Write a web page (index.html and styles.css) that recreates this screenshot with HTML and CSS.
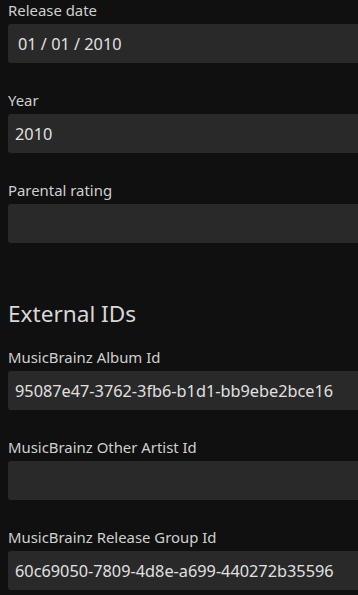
FILE: index.html
```html
<!DOCTYPE html>
<html lang="en">
<head>
<meta charset="UTF-8">
<meta name="viewport" content="width=device-width, initial-scale=1.0">
<title>Edit Metadata</title>
<link rel="stylesheet" href="styles.css">
</head>
<body>

<div class="editor">
  <div class="field">
    <label for="releaseDate">Release date</label>
    <input type="text" id="releaseDate" class="date-input" value="01 / 01 / 2010">
  </div>
  <div class="field">
    <label for="year">Year</label>
    <input type="text" id="year" value="2010">
  </div>
  <div class="field">
    <label for="parentalRating">Parental rating</label>
    <input type="text" id="parentalRating" value="">
  </div>

  <h2>External IDs</h2>

  <div class="field">
    <label for="mbAlbum">MusicBrainz Album Id</label>
    <input type="text" id="mbAlbum" value="95087e47-3762-3fb6-b1d1-bb9ebe2bce16">
  </div>
  <div class="field">
    <label for="mbOtherArtist">MusicBrainz Other Artist Id</label>
    <input type="text" id="mbOtherArtist" value="">
  </div>
  <div class="field">
    <label for="mbReleaseGroup">MusicBrainz Release Group Id</label>
    <input type="text" id="mbReleaseGroup" value="60c69050-7809-4d8e-a699-440272b35596">
  </div>
</div>

</body>
</html>
```

FILE: styles.css
```css
body {
  font-family: 'Noto Sans', sans-serif;
  background-color: #101010;
  color: #d2d2d2;
  margin: 0;
  padding: 0;
  overflow: hidden;
}
.editor {
  padding-left: 8px;
}
.field {
  margin-bottom: 27px;
}
label {
  display: block;
  font-size: 14.9px;
  line-height: 20px;
  margin-bottom: 4px;
  color: #cfcfcf;
}
input[type="text"] {
  display: block;
  box-sizing: border-box;
  width: 100%;
  height: 39px;
  padding: 0 7px;
  border: none;
  border-radius: 3px 0 0 3px;
  background-color: #292929;
  color: #e0e0e0;
  font-family: 'Noto Sans', sans-serif;
  font-size: 16.3px;
  outline: none;
}
.date-input {
  padding-left: 10px !important;
}
h2 {
  font-size: 22.6px;
  font-weight: 400;
  line-height: 30px;
  margin: 56px 0 18px;
  color: #d8d8d8;
}
```
